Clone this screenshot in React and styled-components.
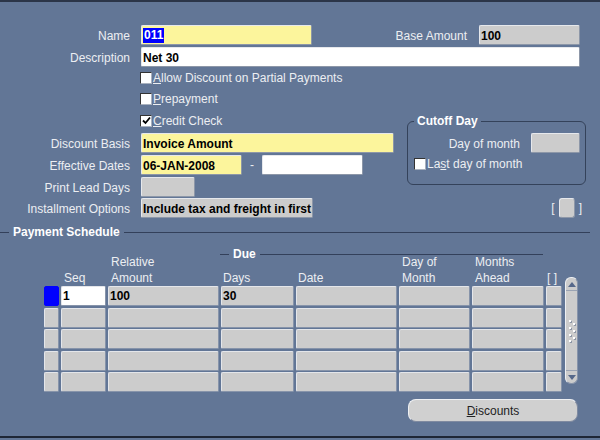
import React from 'react';
import styled, { createGlobalStyle } from 'styled-components';

const Global = createGlobalStyle`
  body {
    margin: 0;
    background: #627696;
    font-family: "Liberation Sans", Arial, sans-serif;
    font-size: 12px;
  }
`;

const Window = styled.div`
  width: 600px;
  height: 438px;
  box-sizing: border-box;
  background: #627696;
  border-top: 2px solid #2b3548;
  border-bottom: 2px solid #1e2635;
  padding-top: 23px;
  display: flex;
  flex-direction: column;
  color: #eceef2;
`;

const Row = styled.div`
  display: flex;
  align-items: center;
  height: 20px;
  margin-bottom: ${(p) => p.$mb ?? 2}px;
  padding-right: ${(p) => p.$pr || 0}px;
`;

const Label = styled.div`
  width: ${(p) => (p.$auto ? 'auto' : '130px')};
  margin-left: ${(p) => (p.$auto ? 'auto' : '0')};
  flex-shrink: 0;
  text-align: right;
  margin-right: ${(p) => p.$mr ?? 11}px;
  padding-top: 1px;
  white-space: nowrap;
`;

const fieldBg = { yellow: '#fcf59c', white: '#ffffff', gray: '#cccccc' };

const Field = styled.div`
  width: ${(p) => p.$w}px;
  height: 20px;
  box-sizing: border-box;
  background: ${(p) => fieldBg[p.$kind || 'gray']};
  border: 1px solid;
  border-color: #e6e8ec #8d97a8 #8d97a8 #e6e8ec;
  border-radius: 2px;
  flex-shrink: 0;
  padding-left: 1px;
  font-weight: bold;
  color: #000;
  line-height: 20px;
  white-space: nowrap;
  overflow: hidden;
`;

const Selected = styled.span`
  display: inline-block;
  vertical-align: top;
  margin-top: 2px;
  background: #0000ff;
  color: #fff;
  line-height: 15px;
  padding: 0 1px;
`;

const Middle = styled.div`
  display: flex;
  align-items: flex-start;
`;

const LeftCol = styled.div`
  display: flex;
  flex-direction: column;
  width: 407px;
`;

const CheckRow = styled.label`
  display: flex;
  align-items: center;
  height: ${(p) => p.$h || 21.5}px;
  padding-left: ${(p) => p.$pl ?? 140}px;
  white-space: nowrap;
`;

const Box = styled.span`
  width: 10px;
  height: 10px;
  background: #fff;
  border-top: 1px solid #333;
  border-left: 1px solid #333;
  border-right: 1px solid #a9b1be;
  border-bottom: 1px solid #a9b1be;
  margin-right: 1px;
  display: flex;
  align-items: center;
  justify-content: center;
`;

const Mn = styled.span`
  text-decoration: underline;
`;

const Checks = styled.div`
  margin-bottom: 1.5px;
`;

const Group = styled.fieldset`
  margin: 47px 14px 0 0;
  width: 179px;
  box-sizing: border-box;
  border: 1px solid #34425a;
  border-radius: 6px;
  padding: 5px 5px 9px 6px;
  min-width: 0;
`;

const Legend = styled.legend`
  padding: 0 3px;
  margin-left: 0;
  font-weight: bold;
  color: #fff;
  line-height: 14px;
`;

const GroupRow = styled.div`
  display: flex;
  align-items: center;
  justify-content: flex-end;
  height: 20px;
`;

const Dash = styled.span`
  width: 20px;
  text-align: center;
`;

const Bracket = styled.span`
  color: #eceef2;
  margin: 0 4px;
`;

const SmallBtn = styled.div`
  width: 16px;
  height: 20px;
  box-sizing: border-box;
  background: #cccccc;
  border: 1px solid;
  border-color: #e6e8ec #8d97a8 #8d97a8 #e6e8ec;
  border-radius: 3px;
`;

const Section = styled.div`
  display: flex;
  align-items: center;
  height: 14px;
  margin-top: 5px;
  margin-right: 10px;
`;

const Line = styled.div`
  height: 1px;
  background: #33405a;
  width: ${(p) => (p.$w ? `${p.$w}px` : 'auto')};
  flex: ${(p) => (p.$w ? '0 0 auto' : '1')};
`;

const Title = styled.span`
  font-weight: bold;
  color: #fff;
  padding: 0 4px;
  white-space: nowrap;
`;

const Table = styled.div`
  display: flex;
  padding-left: 44px;
  margin-top: 7px;
`;

const cols = '15px 45px 111px 73px 101px 71px 72px 16px';

const Grid = styled.div`
  display: flex;
  flex-direction: column;
`;

const Head = styled.div`
  display: grid;
  grid-template-columns: ${cols};
  grid-template-rows: 8px 8px 8px 16px;
  column-gap: 2px;
  line-height: 16px;
`;

const HeadCell = styled.div`
  grid-column: ${(p) => p.$col};
  grid-row: ${(p) => (p.$two ? '2 / 5' : '4 / 5')};
  align-self: end;
  padding-left: ${(p) => p.$pl ?? 3}px;
  white-space: nowrap;
`;

const Due = styled.div`
  grid-column: 4 / 8;
  grid-row: 1 / 3;
  display: flex;
  align-items: center;
  margin-left: -1px;
  margin-right: 1px;
`;

const Body = styled.div`
  display: grid;
  grid-template-columns: ${cols};
  grid-auto-rows: 20px;
  column-gap: 2px;
  row-gap: 1.5px;
`;

const Cell = styled.div`
  box-sizing: border-box;
  background: ${(p) => (p.$sel ? '#0000ff' : p.$white ? '#ffffff' : '#cccccc')};
  border: 1px solid;
  border-color: ${(p) => (p.$sel ? '#0000ff' : '#e4e6ea #8794aa #8794aa #e4e6ea')};
  border-radius: 2px;
  padding-left: 1px;
  font-weight: bold;
  color: #000;
  line-height: 19px;
  overflow: hidden;
`;

const Scroll = styled.div`
  width: 13px;
  margin-left: 3px;
  margin-top: 31px;
  height: 107px;
  box-sizing: border-box;
  background: #cccccc;
  border: 1px solid;
  border-color: #eef0f3 #8794aa #8794aa #eef0f3;
  border-radius: 6px;
  display: flex;
  flex-direction: column;
  align-items: center;
`;

const Arrow = styled.div`
  height: 12px;
  width: 100%;
  display: flex;
  align-items: center;
  justify-content: center;
  border-${(p) => (p.$down ? 'top' : 'bottom')}: 1px solid #9aa3b3;
`;

const Track = styled.div`
  flex: 1;
  display: flex;
  align-items: center;
  justify-content: center;
`;

const Footer = styled.div`
  display: flex;
  justify-content: flex-end;
  padding-right: 22px;
  margin-top: 7px;
`;

const Button = styled.div`
  width: 170px;
  height: 23px;
  box-sizing: border-box;
  background: #d0d0d0;
  border: 1px solid;
  border-color: #eef0f3 #7f8aa0 #7f8aa0 #eef0f3;
  border-radius: 8px;
  color: #222;
  text-align: center;
  line-height: 22px;
`;

const Check = ({ checked, children, pl }) => (
  <CheckRow $pl={pl}>
    <Box>
      {checked && (
        <svg width="9" height="9" viewBox="0 0 9 9">
          <path d="M1 4.5 L3.5 7 L8 1.5" stroke="#000" strokeWidth="1.8" fill="none" />
        </svg>
      )}
    </Box>
    <span>{children}</span>
  </CheckRow>
);

const rows = [
  { seq: '1', amt: '100', days: '30', sel: true },
  {},
  {},
  {},
  {},
];

export default function App() {
  return (
    <Window>
      <Global />
      <Row $pr={20}>
        <Label>Name</Label>
        <Field $w={171} $kind="yellow">
          <Selected>011</Selected>
        </Field>
        <Label $auto $mr={12}>Base Amount</Label>
        <Field $w={101}>100</Field>
      </Row>
      <Row $mb={0}>
        <Label>Description</Label>
        <Field $w={439} $kind="white">Net 30</Field>
      </Row>
      <Middle>
        <LeftCol>
          <Checks>
            <Check><Mn>A</Mn>llow Discount on Partial Payments</Check>
            <Check><Mn>P</Mn>repayment</Check>
            <Check checked><Mn>C</Mn>redit Check</Check>
          </Checks>
          <Row>
            <Label>Discount Basis</Label>
            <Field $w={253} $kind="yellow">Invoice Amount</Field>
          </Row>
          <Row>
            <Label>Effective Dates</Label>
            <Field $w={101} $kind="yellow">06-JAN-2008</Field>
            <Dash>-</Dash>
            <Field $w={101} $kind="white" />
          </Row>
          <Row $mb={1}>
            <Label>Print Lead Days</Label>
            <Field $w={54} />
          </Row>
        </LeftCol>
        <Group>
          <Legend>Cutoff Day</Legend>
          <GroupRow>
            <Label $auto>Day of month</Label>
            <Field $w={49} />
          </GroupRow>
          <Check pl={0}>La<Mn>s</Mn>t day of month</Check>
        </Group>
      </Middle>
      <Row $pr={14}>
        <Label>Installment Options</Label>
        <Field $w={172}>Include tax and freight in first</Field>
        <Bracket style={{ marginLeft: 'auto' }}>[</Bracket>
        <SmallBtn />
        <Bracket>]</Bracket>
      </Row>
      <Section>
        <Line $w={9} />
        <Title>Payment Schedule</Title>
        <Line />
      </Section>
      <Table>
        <Grid>
          <Head>
            <Due>
              <Line $w={9} />
              <Title>Due</Title>
              <Line />
            </Due>
            <HeadCell $col={2}>Seq</HeadCell>
            <HeadCell $col={3} $two>Relative<br />Amount</HeadCell>
            <HeadCell $col={4} $pl={2}>Days</HeadCell>
            <HeadCell $col={5} $pl={2}>Date</HeadCell>
            <HeadCell $col={6} $two>Day of<br />Month</HeadCell>
            <HeadCell $col={7} $two>Months<br />Ahead</HeadCell>
            <HeadCell $col={8} $pl={1}>[ ]</HeadCell>
          </Head>
          <Body>
            {rows.map((r, i) => (
              <React.Fragment key={i}>
                <Cell $sel={r.sel} />
                <Cell $white={r.sel}>{r.seq}</Cell>
                <Cell>{r.amt}</Cell>
                <Cell>{r.days}</Cell>
                <Cell />
                <Cell />
                <Cell />
                <Cell />
              </React.Fragment>
            ))}
          </Body>
        </Grid>
        <Scroll>
          <Arrow>
            <svg width="8" height="5" viewBox="0 0 8 5">
              <path d="M0 5 L4 0 L8 5 Z" fill="#56688a" />
            </svg>
          </Arrow>
          <Track>
            <svg width="9" height="26" viewBox="0 0 9 26">
              {[[2, 2], [6, 5], [2, 9], [6, 12], [2, 16], [6, 19], [2, 22]].map(([x, y], i) => (
                <g key={i}>
                  <rect x={x + 1} y={y + 1} width="2" height="2" fill="#8d96a6" />
                  <rect x={x} y={y} width="2" height="2" fill="#ffffff" />
                </g>
              ))}
            </svg>
          </Track>
          <Arrow $down>
            <svg width="8" height="5" viewBox="0 0 8 5">
              <path d="M0 0 L8 0 L4 5 Z" fill="#56688a" />
            </svg>
          </Arrow>
        </Scroll>
      </Table>
      <Footer>
        <Button><Mn>D</Mn>iscounts</Button>
      </Footer>
    </Window>
  );
}
